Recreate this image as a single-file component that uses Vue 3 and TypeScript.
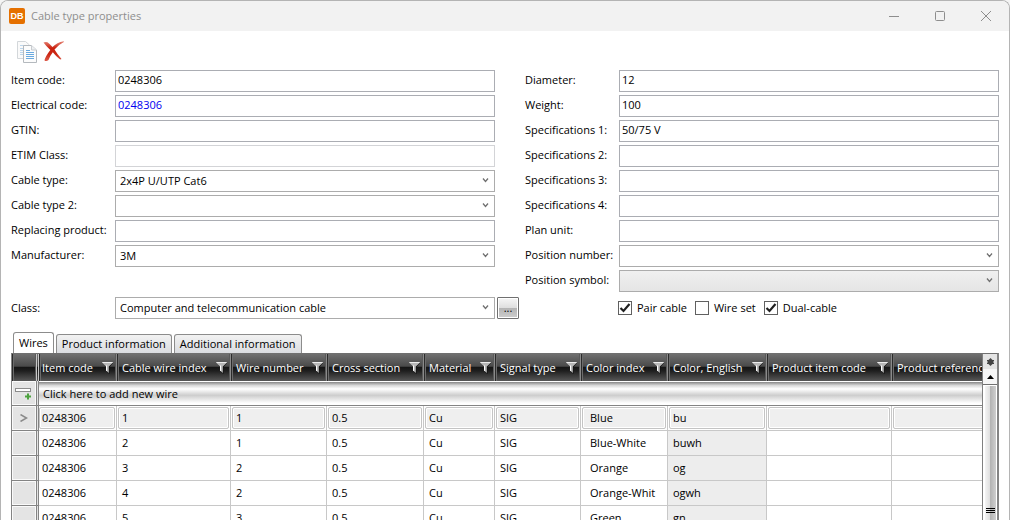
<script setup lang="ts">
import { ref } from 'vue'

interface Field {
  id: string
  label: string
  value: string
  kind: 'text' | 'select'
  tone?: 'link' | 'faint' | 'disabled'
}

interface Column {
  key: string
  title: string
  width: number
}

const leftFields = ref<Field[]>([
  { id: 'item-code', label: 'Item code:', value: '0248306', kind: 'text' },
  { id: 'electrical-code', label: 'Electrical code:', value: '0248306', kind: 'text', tone: 'link' },
  { id: 'gtin', label: 'GTIN:', value: '', kind: 'text' },
  { id: 'etim', label: 'ETIM Class:', value: '', kind: 'text', tone: 'faint' },
  { id: 'cable-type', label: 'Cable type:', value: '2x4P U/UTP Cat6', kind: 'select' },
  { id: 'cable-type-2', label: 'Cable type 2:', value: '', kind: 'select' },
  { id: 'replacing', label: 'Replacing product:', value: '', kind: 'text' },
  { id: 'manufacturer', label: 'Manufacturer:', value: '3M', kind: 'select' },
])

const rightFields = ref<Field[]>([
  { id: 'diameter', label: 'Diameter:', value: '12', kind: 'text' },
  { id: 'weight', label: 'Weight:', value: '100', kind: 'text' },
  { id: 'spec-1', label: 'Specifications 1:', value: '50/75 V', kind: 'text' },
  { id: 'spec-2', label: 'Specifications 2:', value: '', kind: 'text' },
  { id: 'spec-3', label: 'Specifications 3:', value: '', kind: 'text' },
  { id: 'spec-4', label: 'Specifications 4:', value: '', kind: 'text' },
  { id: 'plan-unit', label: 'Plan unit:', value: '', kind: 'text' },
  { id: 'position-number', label: 'Position number:', value: '', kind: 'select' },
  { id: 'position-symbol', label: 'Position symbol:', value: '', kind: 'select', tone: 'disabled' },
])

const groups = [
  { side: 'left', fields: leftFields },
  { side: 'right', fields: rightFields },
]

const checks = ref([
  { label: 'Pair cable', on: true },
  { label: 'Wire set', on: false },
  { label: 'Dual-cable', on: true },
])

const tabs = ['Wires', 'Product information', 'Additional information']
const activeTab = ref('Wires')

const columns: Column[] = [
  { key: 'item', title: 'Item code', width: 78 },
  { key: 'index', title: 'Cable wire index', width: 114 },
  { key: 'number', title: 'Wire number', width: 96 },
  { key: 'section', title: 'Cross section', width: 97 },
  { key: 'material', title: 'Material', width: 71 },
  { key: 'signal', title: 'Signal type', width: 86 },
  { key: 'color', title: 'Color index', width: 87 },
  { key: 'english', title: 'Color, English', width: 99 },
  { key: 'product', title: 'Product item code', width: 125 },
  { key: 'reference', title: 'Product reference', width: 135 },
]

const rows: Record<string, string>[] = [
  ['1', '1', 'Blue', 'bu'],
  ['2', '1', 'Blue-White', 'buwh'],
  ['3', '2', 'Orange', 'og'],
  ['4', '2', 'Orange-Whit', 'ogwh'],
  ['5', '3', 'Green', 'gn'],
].map(([index, number, color, english]) => ({
  item: '0248306', index, number, section: '0.5', material: 'Cu', signal: 'SIG',
  color, english, product: '', reference: '',
}))
</script>

<template>
  <div class="window">
    <header class="titlebar">
      <span class="app-icon">DB</span>
      <h1 class="title">Cable type properties</h1>
      <div class="window-buttons">
        <button type="button" aria-label="Minimize">
          <svg width="12" height="12" viewBox="0 0 12 12"><path d="M1 6.5H11" /></svg>
        </button>
        <button type="button" aria-label="Maximize">
          <svg width="12" height="12" viewBox="0 0 12 12"><rect x="1.5" y="1.5" width="9" height="9" rx="1" /></svg>
        </button>
        <button type="button" aria-label="Close">
          <svg width="12" height="12" viewBox="0 0 12 12"><path d="M1 1L11 11M11 1L1 11" /></svg>
        </button>
      </div>
    </header>

    <div class="toolbar">
      <button type="button" aria-label="Copy">
        <svg width="21" height="22" viewBox="0 0 21 22">
          <path d="M.5.5H8.500L12.500 4V17.500H.5Z" fill="#fafafa" stroke="#d3d7da" />
          <path d="M3 4.500H8M3 7.500H6M3 9.500H6M3 11.500H6M3 13.500H6" stroke="#bcd6ec" />
          <path d="M6.500 4.500H14.500L19.500 9V21.500H6.500Z" fill="#fcfcfc" stroke="#b4b9be" />
          <path d="M14.500 4.500V9H19.500" fill="#eef0f2" stroke="#c8ccd0" />
          <path d="M9 9.500H13M9 11.500H17M9 13.500H17M9 15.500H17M9 17.500H17" stroke="#6aaae0" />
        </svg>
      </button>
      <button type="button" aria-label="Delete">
        <svg width="22" height="21" viewBox="0 0 22 21">
          <defs>
            <linearGradient id="cross" x1="0" y1="0" x2="0" y2="1">
              <stop offset="0" stop-color="#e58577" />
              <stop offset=".35" stop-color="#c9200e" />
              <stop offset=".65" stop-color="#cc2714" />
              <stop offset="1" stop-color="#dc5a49" />
            </linearGradient>
          </defs>
          <path d="M.5 1.500Q2.500.5 4.500 1.200Q7 3 9.500 6Q14 1.500 20.500.3Q21.500.8 20.500 1.300Q15 4 11.500 8.500Q14.500 13.500 18.500 18Q17.500 18.800 16.500 18Q12.500 14.800 9.800 11.300Q7 15 5.500 19Q3.500 20.800 1.500 19.500Q2 16 7.300 9Q3.500 5.500 .5 1.500Z" fill="url(#cross)" />
        </svg>
      </button>
    </div>

    <form class="form" @submit.prevent>
      <div v-for="group in groups" :key="group.side" class="fields" :class="group.side">
        <template v-for="field in group.fields.value" :key="field.id">
          <label :for="field.id">{{ field.label }}</label>
          <input
            v-if="field.kind === 'text'"
            :id="field.id"
            v-model="field.value"
            type="text"
            :class="field.tone"
          />
          <select
            v-else
            :id="field.id"
            v-model="field.value"
            :disabled="field.tone === 'disabled'"
          >
            <option :value="field.value">{{ field.value }}</option>
          </select>
        </template>
      </div>
      <label class="class-label" for="cable-class">Class:</label>
      <select id="cable-class">
        <option>Computer and telecommunication cable</option>
      </select>
      <button type="button" class="browse" aria-label="Browse classes">...</button>
      <div class="checks">
        <label v-for="check in checks" :key="check.label">
          <input v-model="check.on" type="checkbox" />{{ check.label }}
        </label>
      </div>
    </form>

    <nav class="tabs" role="tablist">
      <button
        v-for="tab in tabs"
        :key="tab"
        type="button"
        role="tab"
        :aria-selected="tab === activeTab"
        :class="{ active: tab === activeTab }"
        @click="activeTab = tab"
      >{{ tab }}</button>
    </nav>

    <section class="grid">
      <div class="viewport">
        <table>
          <colgroup>
            <col class="marker-col" />
            <col v-for="column in columns" :key="column.key" :style="{ width: column.width + 'px' }" />
          </colgroup>
          <thead>
            <tr>
              <th class="corner"></th>
              <th v-for="column in columns" :key="column.key" scope="col">
                <div class="head">
                  <span>{{ column.title }}</span>
                  <svg width="11" height="12" viewBox="0 0 11 12">
                    <path d="M1 1H11L7.500 5V12L4 9V5Z" fill="#101010" />
                    <path d="M0 0H11L10 1.500L6.800 4.500V11L4 8.500V4.500L1 1.500Z" fill="#b8b8b8" />
                    <path d="M0 0H11L10 1H1Z" fill="#ececec" />
                    <path d="M4 3.500H5V9.200L4 8.500Z" fill="#fff" />
                  </svg>
                </div>
              </th>
            </tr>
          </thead>
          <tbody>
            <tr class="new-row">
              <th class="marker">
                <svg width="18" height="13" viewBox="0 0 18 13">
                  <rect x=".5" y="1.500" width="15" height="3" fill="#fff" stroke="#8c8c8c" />
                  <path d="M10 9.500H16M13 6.500V12.500" stroke="#4da33f" stroke-width="2" />
                </svg>
              </th>
              <td :colspan="columns.length">Click here to add new wire</td>
            </tr>
            <tr v-for="(row, i) in rows" :key="row.index" :class="{ current: i === 0 }">
              <th class="marker">
                <svg v-if="i === 0" width="8" height="8" viewBox="0 0 8 8">
                  <path d="M.5.500L6.500 4L.5 7.500" fill="none" stroke="#8a8a8a" stroke-width="1.500" />
                </svg>
              </th>
              <td v-for="column in columns" :key="column.key" :class="column.key">
                <div class="cell">{{ row[column.key] }}</div>
              </td>
            </tr>
          </tbody>
        </table>
      </div>
      <div class="scrollbar">
        <button type="button" class="split" aria-label="Split view">
          <svg width="7" height="8" viewBox="0 0 7 8">
            <path d="M3.500 0L5.500 2H7V3.500H6V4.500H7V6H5.500L3.500 8L1.500 6H0V4.500H1V3.500H0V2H1.500Z" fill="#444" />
          </svg>
        </button>
        <button type="button" class="up" aria-label="Scroll up">
          <svg width="7" height="4" viewBox="0 0 7 4"><path d="M3.500 0L7 4H0Z" /></svg>
        </button>
        <div class="track">
          <div class="thumb">
            <svg width="9" height="5" viewBox="0 0 9 5"><path d="M0 .5H9M0 2.500H9M0 4.500H9" stroke="#000" /></svg>
          </div>
        </div>
      </div>
    </section>
  </div>
</template>

<style>
html,
body {
  background: #f4f4f4;
}
</style>

<style scoped>
.window {
  box-sizing: border-box;
  display: flex;
  flex-direction: column;
  height: 100vh;
  overflow: hidden;
  border: 1px solid #b4b4b4;
  border-bottom: 0;
  border-radius: 8px 8px 0 0;
  background: #fff;
  color: #000;
  font: 11px/16px "Open Sans", "Noto Sans", sans-serif;
}

.window *,
.window *::before {
  box-sizing: border-box;
}

button,
input,
select {
  margin: 0;
  font: inherit;
  color: inherit;
}

button {
  padding: 0;
  border: 0;
  background: none;
}

svg {
  display: block;
}

.titlebar {
  display: flex;
  flex: none;
  align-items: center;
  height: 30px;
  padding-left: 8px;
  background: #f2f2f2;
  color: #8e8e8e;
}

.app-icon {
  width: 16px;
  height: 16px;
  border-radius: 2px;
  background: #e57000;
  color: #fff;
  font: bold 9px/16px "Liberation Sans", sans-serif;
  text-align: center;
}

.title {
  flex: 1;
  margin: 0 0 0 6px;
  font-size: 11px;
  font-weight: 400;
}

.window-buttons {
  display: flex;
}

.window-buttons button {
  display: grid;
  place-items: center;
  width: 46px;
  height: 30px;
}

.window-buttons svg {
  fill: none;
  stroke: #8e8e8e;
}

.toolbar {
  display: flex;
  flex: none;
  gap: 5px;
  align-items: center;
  height: 39px;
  padding: 2px 0 0 16px;
}

.form {
  display: grid;
  flex: none;
  grid-template-columns: 104px 1fr 30px 94px 1fr;
  row-gap: 5px;
  padding: 0 10px;
}

.fields {
  display: grid;
  grid-template-columns: subgrid;
  grid-auto-rows: 22px;
  row-gap: 3px;
  align-content: start;
}

.fields.left {
  grid-column: 1 / 3;
}

.fields.right {
  grid-column: 4 / 6;
}

.fields label {
  line-height: 20px;
  white-space: nowrap;
}

.class-label {
  line-height: 22px;
}

input[type='text'] {
  width: 100%;
  min-width: 0;
  height: 22px;
  padding: 0 2px 4px;
  border: 1px solid #abadb3;
  background: #fff;
  outline: 0;
}

input.link {
  color: #0000f0;
}

input.faint {
  border-color: #d3d4d7;
}

select {
  width: 100%;
  min-width: 0;
  height: 22px;
  padding: 0 20px 0 4px;
  border: 1px solid #acacac;
  border-radius: 0;
  appearance: none;
  background: #fff url("data:image/svg+xml,%3Csvg xmlns='http://www.w3.org/2000/svg' width='7' height='5' viewBox='0 0 7 5'%3E%3Cpath d='M1 .5L3.500 3.500L6 .5' fill='none' stroke='%23707070' stroke-width='1.300'/%3E%3C/svg%3E") no-repeat right 5px top 7px;
}

select:disabled {
  background-image: url("data:image/svg+xml,%3Csvg xmlns='http://www.w3.org/2000/svg' width='7' height='5' viewBox='0 0 7 5'%3E%3Cpath d='M1 .5L3.500 3.500L6 .5' fill='none' stroke='%23707070' stroke-width='1.300'/%3E%3C/svg%3E"), linear-gradient(#f0f0f0, #e5e5e5);
  background-position: right 5px top 7px, 0 0;
  background-repeat: no-repeat;
  opacity: 1;
}

.browse {
  width: 22px;
  height: 22px;
  margin-left: 2px;
  border: 1px solid #707070;
  border-radius: 1px;
  background: linear-gradient(#f6f6f6, #dedede 50%, #b4b4b4 51%, #cecece);
  box-shadow: inset 0 0 0 1px #fff;
}

.checks {
  display: flex;
  grid-column: 5;
  gap: 8px;
  align-items: center;
  margin-left: -1px;
}

.checks label {
  display: flex;
  gap: 5px;
  align-items: center;
  white-space: nowrap;
}

.checks input {
  width: 14px;
  height: 14px;
  border: 1px solid #606060;
  appearance: none;
  background: #fff;
}

.checks input:checked {
  background: #fff url("data:image/svg+xml,%3Csvg xmlns='http://www.w3.org/2000/svg' width='12' height='12' viewBox='0 0 12 12'%3E%3Cpath d='M1.500 6L4.500 9L10.500 2' fill='none' stroke='%23202020' stroke-width='2.200'/%3E%3C/svg%3E") center no-repeat;
}

.tabs {
  display: flex;
  flex: none;
  gap: 2px;
  align-items: flex-end;
  height: 34px;
  padding: 0 12px;
}

.tabs button {
  height: 19px;
  padding: 0 5px;
  border: 1px solid #8c8c8c;
  border-bottom: 0;
  border-radius: 3px 3px 0 0;
  background: linear-gradient(#f2f2f2, #dadce0);
  white-space: nowrap;
}

.tabs button.active {
  height: 21px;
  background: #fff;
}

.grid {
  display: flex;
  flex: 1;
  min-height: 0;
  margin: 0 10px;
  border-top: 1px solid #707070;
  border-right: 2px solid #848484;
  border-left: 1px solid #848484;
}

.viewport {
  flex: 1;
  min-width: 0;
  overflow: hidden;
}

table {
  width: 100%;
  border-spacing: 0;
  table-layout: fixed;
}

.marker-col {
  width: 27px;
}

th,
td {
  padding: 0;
  font-weight: 400;
  text-align: left;
  white-space: nowrap;
}

thead th {
  height: 27px;
  border-right: 1px solid #8a8a8a;
  background: linear-gradient(#707070, #4a4a4a 45%, #161616 50%, #1e1e1e 62%, #585858);
  box-shadow: inset 1px 0 #2c2c2c, inset 2px 0 #6c6c6c, inset -1px 0 #5a5a5a;
  color: #fff;
}

thead th.corner {
  border-right: 3px double #c8c8c8;
}

.head {
  display: flex;
  align-items: center;
  padding: 0 3px 0 5px;
}

.corner + th .head {
  padding-left: 3px;
}

.head span {
  flex: 1;
}

.head svg {
  flex: none;
}

.marker {
  height: 25px;
  border-right: 3px double #848484;
  border-bottom: 1px solid #848484;
  background: #e4e4e4;
  box-shadow: inset 0 0 0 1px #fafafa;
}

.marker svg {
  margin: 0 auto;
}

.new-row td {
  padding-left: 4px;
  border-top: 1px solid #fff;
  border-bottom: 1px solid #848484;
  background: linear-gradient(#868686, #d8d8d8 15%, #fff 30%, #cdcdcd 58%, #fff 92%);
}

tbody td {
  border-right: 1px solid #c8c8c8;
  border-bottom: 1px solid #c8c8c8;
}

.cell {
  height: 22px;
  padding-left: 5px;
  overflow: hidden;
  line-height: 22px;
}

.item .cell {
  padding-left: 3px;
}

.color .cell {
  padding-left: 9px;
}

.english {
  background: #ededed;
}

.current td {
  background: #fff;
}

.current .cell {
  margin: 0 1px 0 0;
  border: 1px solid #c4c4c4;
  border-radius: 2px;
  background: #efefef;
  box-shadow: inset 0 0 0 1px #fff;
  line-height: 20px;
}

.current td:not(.item) .cell {
  margin-left: 1px;
  padding-left: 3px;
}

.current .item .cell {
  padding-left: 2px;
}

.current td.color .cell {
  padding-left: 7px;
}

.scrollbar {
  display: flex;
  flex: none;
  flex-direction: column;
  width: 15px;
  border-left: 1px solid #808080;
}

.scrollbar button {
  display: grid;
  flex: none;
  place-items: center;
  height: 15px;
}

.split {
  background: #e4e4e4;
}

.up {
  background: #f6f6f6;
}

.track {
  display: flex;
  flex: 1;
  min-height: 0;
  padding: 1px 1px 0 2px;
  border-top: 1px solid #707070;
  background: #fff;
}

.thumb {
  flex: 1;
  padding: 122px 0 0 1px;
  overflow: hidden;
  background: linear-gradient(90deg, #f4f4f4, #dedede 45%, #b4b4b4 50%, #cfcfcf);
}
</style>
